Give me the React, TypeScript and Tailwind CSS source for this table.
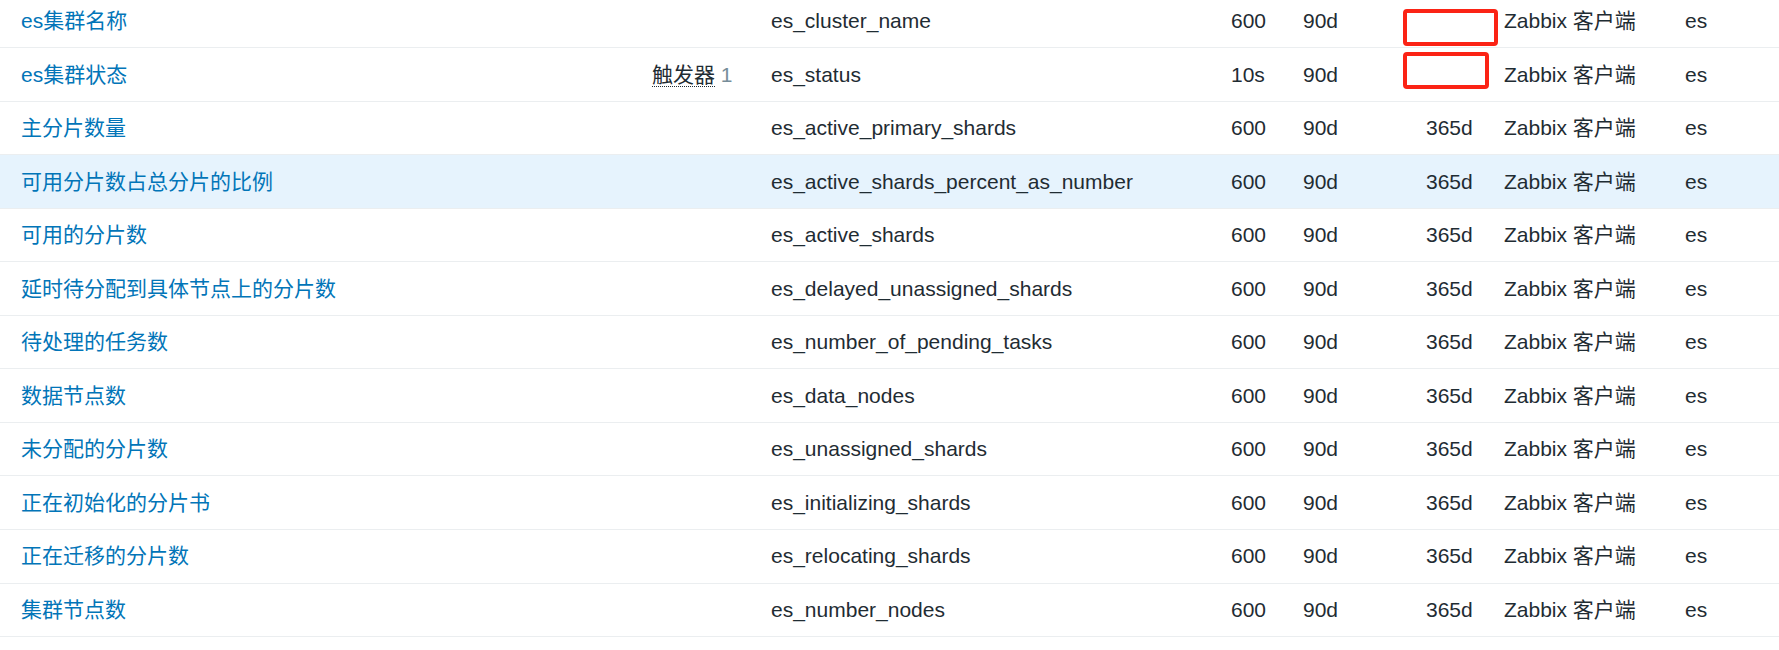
import React from "react";

type Item = {
  name: string;
  triggers?: number;
  key: string;
  interval: string;
  history: string;
  trends: string;
  type: string;
  app: string;
  masked?: "a" | "b";
};

const items: Item[] = [
  { name: "es集群名称", key: "es_cluster_name", interval: "600", history: "90d", trends: "", type: "Zabbix 客户端", app: "es", masked: "a" },
  { name: "es集群状态", triggers: 1, key: "es_status", interval: "10s", history: "90d", trends: "", type: "Zabbix 客户端", app: "es", masked: "b" },
  { name: "主分片数量", key: "es_active_primary_shards", interval: "600", history: "90d", trends: "365d", type: "Zabbix 客户端", app: "es" },
  { name: "可用分片数占总分片的比例", key: "es_active_shards_percent_as_number", interval: "600", history: "90d", trends: "365d", type: "Zabbix 客户端", app: "es" },
  { name: "可用的分片数", key: "es_active_shards", interval: "600", history: "90d", trends: "365d", type: "Zabbix 客户端", app: "es" },
  { name: "延时待分配到具体节点上的分片数", key: "es_delayed_unassigned_shards", interval: "600", history: "90d", trends: "365d", type: "Zabbix 客户端", app: "es" },
  { name: "待处理的任务数", key: "es_number_of_pending_tasks", interval: "600", history: "90d", trends: "365d", type: "Zabbix 客户端", app: "es" },
  { name: "数据节点数", key: "es_data_nodes", interval: "600", history: "90d", trends: "365d", type: "Zabbix 客户端", app: "es" },
  { name: "未分配的分片数", key: "es_unassigned_shards", interval: "600", history: "90d", trends: "365d", type: "Zabbix 客户端", app: "es" },
  { name: "正在初始化的分片书", key: "es_initializing_shards", interval: "600", history: "90d", trends: "365d", type: "Zabbix 客户端", app: "es" },
  { name: "正在迁移的分片数", key: "es_relocating_shards", interval: "600", history: "90d", trends: "365d", type: "Zabbix 客户端", app: "es" },
  { name: "集群节点数", key: "es_number_nodes", interval: "600", history: "90d", trends: "365d", type: "Zabbix 客户端", app: "es" },
];

export default function App() {
  return (
    <div
      className="w-[1779px] h-[650px] overflow-hidden bg-white text-[21px] text-[#1f2c33]"
      style={{ fontFamily: '"Liberation Sans", "Noto Sans CJK SC", sans-serif' }}
    >
      {/* first row is cut off at the top of the shot */}
      <div className="-mt-[5.5px]">
        {items.map((item, idx) => (
          <div
            key={item.key}
            className={`relative grid grid-cols-[21px_631px_119px_460px_72px_123px_78px_181px_1fr] items-center h-[53.55px] border-b border-[#ebeef0] whitespace-nowrap ${
              idx === 3 ? "bg-[#e6f3fd]" : "bg-white"
            }`}
          >
            <div />
            <div className="text-[#0275b8]">{item.name}</div>
            <div>
              {item.triggers ? (
                <>
                  <span className="border-b border-dotted border-[#1f2c33] leading-[22px] inline-block">
                    触发器
                  </span>{" "}
                  <span className="text-[#768d99]">{item.triggers}</span>
                </>
              ) : null}
            </div>
            <div>{item.key}</div>
            <div>{item.interval}</div>
            <div>{item.history}</div>
            <div>{item.trends}</div>
            <div>{item.type}</div>
            <div>{item.app}</div>

            {/* red annotation boxes over the trends cell */}
            {item.masked === "a" && (
              <div className="absolute left-[1403px] top-[14.5px] w-[95px] h-[37px] border-[4px] border-[#fb2315] rounded-[4px]" />
            )}
            {item.masked === "b" && (
              <div className="absolute left-[1403px] top-[4px] w-[86px] h-[37px] border-[4px] border-[#fb2315] rounded-[4px]" />
            )}
          </div>
        ))}
      </div>
    </div>
  );
}
